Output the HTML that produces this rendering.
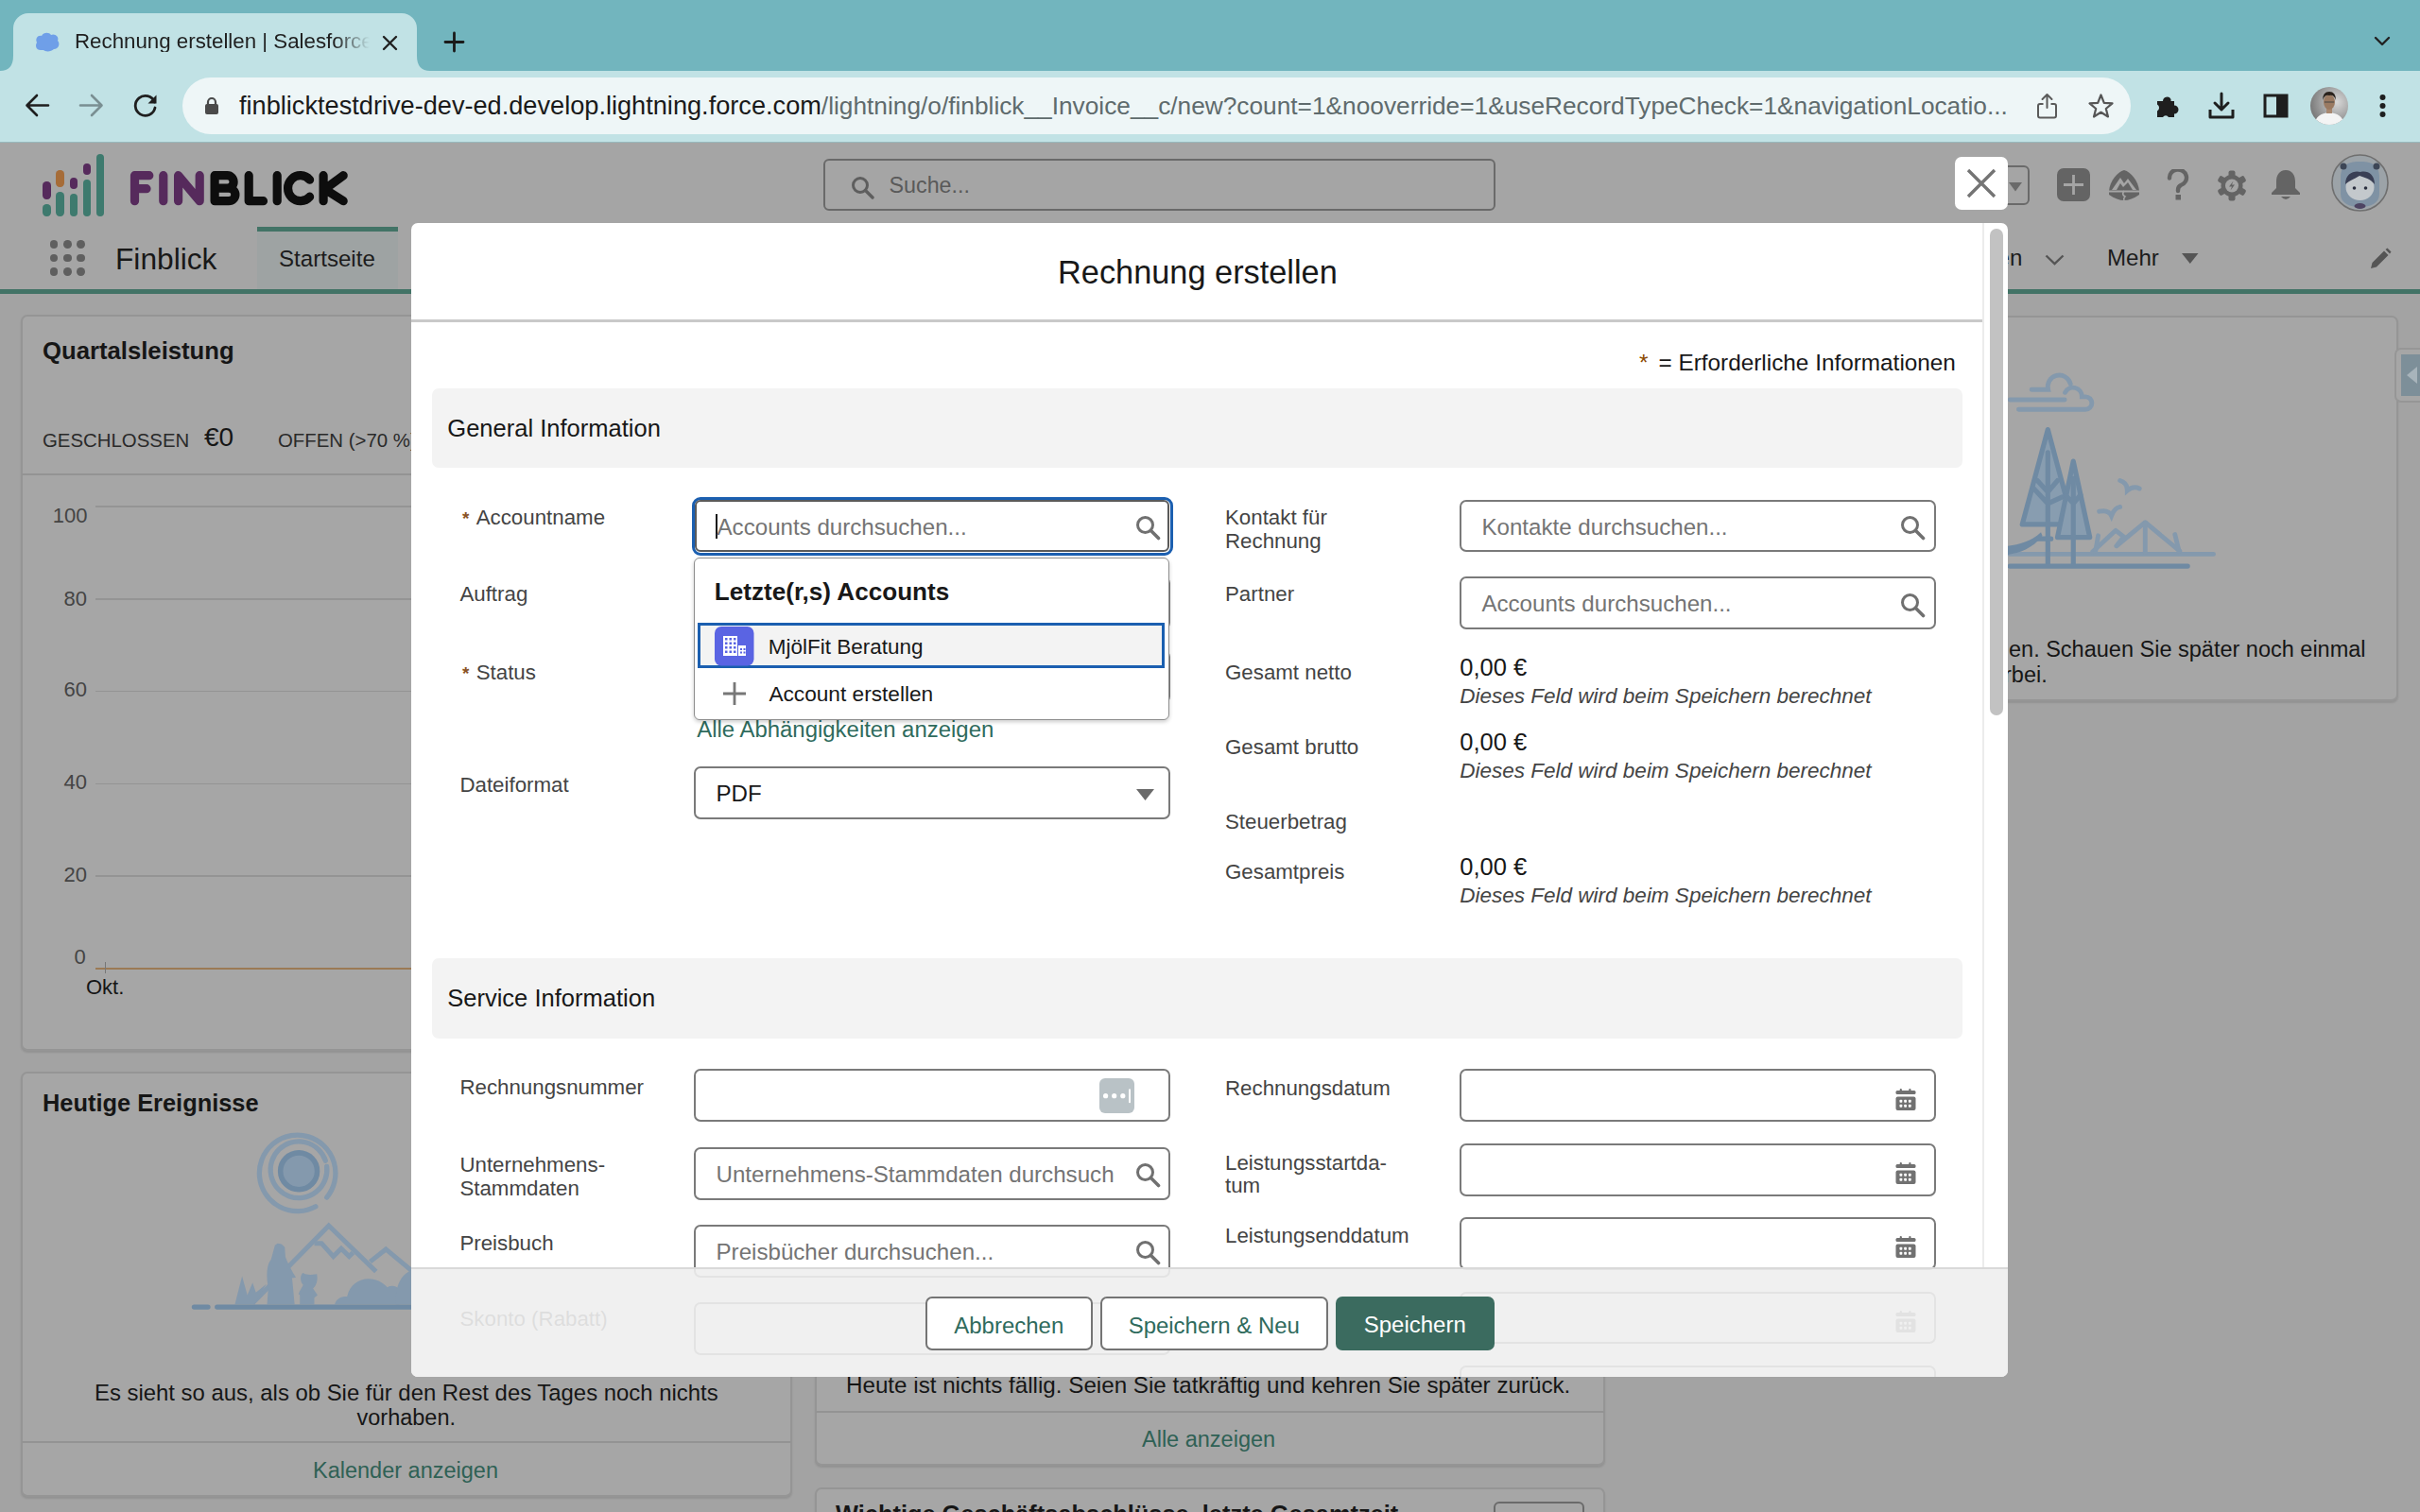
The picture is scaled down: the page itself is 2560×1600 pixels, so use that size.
<!DOCTYPE html>
<html><head><meta charset="utf-8"><title>Rechnung erstellen</title>
<style>
html,body{margin:0;padding:0;width:2560px;height:1600px;overflow:hidden;background:#a3a3a3;}
body{position:relative;font-family:"Liberation Sans",sans-serif;}
.t{position:absolute;white-space:nowrap;line-height:1;}
.r{position:absolute;box-sizing:border-box;}
</style></head><body>
<div class="r" style="left:0.0px;top:0.0px;width:2560.0px;height:75.0px;background:#72b5be;"></div>
<div class="r" style="left:0.0px;top:75.0px;width:2560.0px;height:76.0px;background:#c1e2e5;"></div>
<div class="r" style="left:0.0px;top:149.5px;width:2560.0px;height:1.5px;background:#98b9bd;"></div>
<div class="r" style="left:14.0px;top:14.0px;width:427.0px;height:62.0px;background:#c1e2e5;border-radius:16px 16px 0 0;"></div>
<svg class="r" style="left:0px;top:59px" width="16" height="16"><path d="M0 16 Q14 16 14 0 L16 0 L16 16 Z" fill="#c1e2e5"/></svg>
<svg class="r" style="left:439px;top:59px" width="16" height="16"><path d="M16 16 Q2 16 2 0 L0 0 L0 16 Z" fill="#c1e2e5"/></svg>
<svg class="r" style="left:36px;top:33px;" width="28" height="22" viewBox="0 0 28 22"><path d="M7 20 C2 20 1 15 3 12 C1 8 4 4 8 5 C10 1 16 1 18 4 C22 2 27 6 25 10 C28 13 26 19 21 19 C18 22 12 22 10 20 Z" fill="#6f9fe8"/></svg>
<div class="t " style="left:79.0px;top:32.6px;font-size:22.3px;color:#1f1f1f;font-weight:400;font-style:normal;width:312px;overflow:hidden;-webkit-mask-image:linear-gradient(90deg,#000 88%,transparent 100%);">Rechnung erstellen | Salesforce</div>
<svg class="r" style="left:404px;top:37px;" width="17" height="17" viewBox="0 0 17 17"><path d="M2 2 L15 15 M15 2 L2 15" stroke="#222" stroke-width="2.4" stroke-linecap="round"/></svg>
<svg class="r" style="left:469px;top:33px;" width="23" height="23" viewBox="0 0 23 23"><path d="M11.5 2 V21 M2 11.5 H21" stroke="#1a1a1a" stroke-width="2.8" stroke-linecap="round"/></svg>
<svg class="r" style="left:2511px;top:38px;" width="18" height="12" viewBox="0 0 18 12"><path d="M2 2 L9 9 L16 2" stroke="#222" stroke-width="2.4" fill="none" stroke-linecap="round" stroke-linejoin="round"/></svg>
<svg class="r" style="left:26px;top:98px;" width="27" height="27" viewBox="0 0 27 27"><path d="M25 13.5 H3 M13 3 L2.5 13.5 L13 24" stroke="#1f1f1f" stroke-width="2.6" fill="none" stroke-linecap="round" stroke-linejoin="round"/></svg>
<svg class="r" style="left:83px;top:98px;" width="27" height="27" viewBox="0 0 27 27"><path d="M2 13.5 H24 M14 3 L24.5 13.5 L14 24" stroke="#7a8f92" stroke-width="2.6" fill="none" stroke-linecap="round" stroke-linejoin="round"/></svg>
<svg class="r" style="left:140px;top:98px;" width="28" height="27" viewBox="0 0 28 27"><path d="M23.5 10 A10.5 10.5 0 1 0 24 16" stroke="#1f1f1f" stroke-width="2.8" fill="none" stroke-linecap="round"/><path d="M25.5 2.5 V11.5 H16.5 Z" fill="#1f1f1f"/></svg>
<div class="r" style="left:193.0px;top:82.0px;width:2061.0px;height:60.0px;background:#eef6f7;border-radius:30px;"></div>
<svg class="r" style="left:216px;top:102px;" width="16" height="20" viewBox="0 0 16 20"><rect x="1" y="8" width="14" height="11" rx="2" fill="#4a4a4a"/><path d="M4 9 V6 A4 4 0 0 1 12 6 V9" stroke="#4a4a4a" stroke-width="2.2" fill="none"/></svg>
<div class="t " style="left:253.0px;top:97.5px;font-size:27.16px;color:#1a1a1a;font-weight:400;font-style:normal;">finblicktestdrive-dev-ed.develop.lightning.force.com<span style="color:#5f6b6d;font-size:26.27px">/lightning/o/finblick__Invoice__c/new?count=1&amp;nooverride=1&amp;useRecordTypeCheck=1&amp;navigationLocatio...</span></div>
<svg class="r" style="left:2153px;top:98px;" width="25" height="28" viewBox="0 0 25 28"><path d="M12.5 2.5 V16 M7.5 7 L12.5 2 L17.5 7" stroke="#5a5a5a" stroke-width="2" fill="none" stroke-linecap="round" stroke-linejoin="round"/><path d="M8.5 12 H5 Q3 12 3 14 V24.5 Q3 26.5 5 26.5 H20 Q22 26.5 22 24.5 V14 Q22 12 20 12 H16.5" stroke="#5a5a5a" stroke-width="2" fill="none" stroke-linejoin="round"/></svg>
<svg class="r" style="left:2208px;top:98px;" width="29" height="28" viewBox="0 0 29 28"><path d="M14.5 2.5 L17.8 10.8 L26.5 11.4 L19.8 17 L22 25.5 L14.5 20.8 L7 25.5 L9.2 17 L2.5 11.4 L11.2 10.8 Z" stroke="#555" stroke-width="2.2" fill="none" stroke-linejoin="round"/></svg>
<svg class="r" style="left:2280px;top:98px;" width="28" height="27" viewBox="0 0 28 27"><path d="M2 9 H8 A4.5 4.5 0 0 1 16.5 7 L16.5 9 H20 V13.5 A4.5 4.5 0 0 1 20 22.5 V26 H14 A3.5 3.5 0 0 0 8 26 H2 V19.5 A4 4 0 0 0 2 12.5 Z" fill="#1e1e1e"/></svg>
<svg class="r" style="left:2335px;top:97px;" width="30" height="30" viewBox="0 0 30 30"><path d="M15 2 V19 M8 12 L15 19 L22 12" stroke="#1e1e1e" stroke-width="3" fill="none" stroke-linecap="round" stroke-linejoin="round"/><path d="M3 19 V27 H27 V19" stroke="#1e1e1e" stroke-width="3" fill="none" stroke-linejoin="round"/></svg>
<svg class="r" style="left:2394px;top:99px;" width="27" height="26" viewBox="0 0 27 26"><rect x="2" y="2" width="23" height="22" fill="none" stroke="#1e1e1e" stroke-width="3"/><rect x="14" y="2" width="11" height="22" fill="#1e1e1e"/></svg>
<svg class="r" style="left:2444px;top:92px;" width="40" height="40" viewBox="0 0 40 40"><defs><clipPath id="pc"><circle cx="20" cy="20" r="20"/></clipPath><radialGradient id="pg" cx="0.7" cy="0.4" r="0.8"><stop offset="0" stop-color="#d8d8d8"/><stop offset="1" stop-color="#6e6e6e"/></radialGradient></defs><g clip-path="url(#pc)"><rect x="0" y="0" width="40" height="40" fill="url(#pg)"/><path d="M4 40 Q6 28 20 27 Q34 28 36 40 Z" fill="#f4f4f4"/><rect x="17" y="22" width="6" height="6" fill="#a88870"/><ellipse cx="20" cy="16" rx="6" ry="8" fill="#9a7a62"/><path d="M13 14 Q13 5 20 5 Q27 5 27 14 Q25 8 20 9 Q15 8 13 14 Z" fill="#2a221c"/><path d="M15 16 H25" stroke="#444" stroke-width="1"/></g></svg>
<svg class="r" style="left:2516px;top:99px;" width="9" height="26" viewBox="0 0 9 26"><circle cx="4.5" cy="4" r="3" fill="#1e1e1e"/><circle cx="4.5" cy="13" r="3" fill="#1e1e1e"/><circle cx="4.5" cy="22" r="3" fill="#1e1e1e"/></svg>
<div class="r" style="left:0.0px;top:151.0px;width:2560.0px;height:159.0px;background:#a5a5a5;"></div>
<div class="r" style="left:45.4px;top:192.0px;width:8.3px;height:18.7px;background:#562a5c;border-radius:4.2px;"></div>
<div class="r" style="left:45.4px;top:216.2px;width:8.3px;height:12.6px;background:#3e7a6e;border-radius:4.2px;"></div>
<div class="r" style="left:59.3px;top:179.6px;width:8.3px;height:18.9px;background:#a66c38;border-radius:4.2px;"></div>
<div class="r" style="left:59.3px;top:203.2px;width:8.3px;height:25.6px;background:#3e7a6e;border-radius:4.2px;"></div>
<div class="r" style="left:73.5px;top:188.3px;width:8.3px;height:11.6px;background:#562a5c;border-radius:4.2px;"></div>
<div class="r" style="left:73.5px;top:204.7px;width:8.3px;height:24.1px;background:#3e7a6e;border-radius:4.2px;"></div>
<div class="r" style="left:87.8px;top:173.4px;width:8.3px;height:11.3px;background:#562a5c;border-radius:4.2px;"></div>
<div class="r" style="left:87.8px;top:189.8px;width:8.3px;height:39.0px;background:#3e7a6e;border-radius:4.2px;"></div>
<div class="r" style="left:101.6px;top:162.7px;width:8.3px;height:66.1px;background:#3e7a6e;border-radius:4.2px;"></div>
<svg class="r" style="left:130px;top:170px;" width="250" height="60" viewBox="0 0 250 60"><g fill="none" stroke-width="9.2" stroke-linecap="round" stroke-linejoin="round" transform="translate(-130 -170)">
<g stroke="#562a5c">
<path d="M142.5 212.7 V185.7 H157.8 M142.5 199.7 H155"/>
<path d="M172.8 185.7 V212.7"/>
<path d="M188.6 212.7 V185.7 L211.2 212.7 V185.7"/>
</g>
<g stroke="#0d0d0d">
<path d="M227.1 185.7 V212.7 H242 A6.9 6.75 0 0 0 242 199.2 H227.1 M227.1 185.7 H240.5 A6.6 6.75 0 0 1 240.5 199.2"/>
<path d="M263.2 185.7 V212.7 H278.5"/>
<path d="M293.2 185.7 V212.7"/>
<path d="M327.6 190.2 A13.2 13.5 0 1 0 327.6 208.2"/>
<path d="M342.1 185.7 V212.7 M363.2 185.7 L343.5 200.2 L363.2 212.7"/>
</g></g></svg>
<div class="r" style="left:870.5px;top:168.0px;width:711.0px;height:55.0px;border:2px solid #6a6a6a;border-radius:6px;"></div>
<svg class="r" style="left:900px;top:186px;" width="26" height="25" viewBox="0 0 26 25"><circle cx="10" cy="10" r="7.5" stroke="#5e5e5e" stroke-width="3" fill="none"/><path d="M15.5 15.5 L23 23" stroke="#5e5e5e" stroke-width="3.4" stroke-linecap="round"/></svg>
<div class="t " style="left:940.5px;top:185.3px;font-size:23.3px;color:#5a5a5a;font-weight:400;font-style:normal;">Suche...</div>
<div class="r" style="left:2100.0px;top:175.0px;width:47.0px;height:41.5px;border:2px solid #6a6a6a;border-radius:6px;"></div>
<svg class="r" style="left:2125px;top:193px;" width="15" height="10" viewBox="0 0 15 10"><path d="M0 0 H14 L7 9.5 Z" fill="#6a6a6a"/></svg>
<svg class="r" style="left:2176px;top:178px;" width="35" height="35" viewBox="0 0 35 35"><rect x="0" y="0" width="35" height="35" rx="7" fill="#646464"/><path d="M17.5 7 V28 M7 17.5 H28" stroke="#a5a5a5" stroke-width="2.8"/></svg>
<svg class="r" style="left:2230px;top:179px;" width="34" height="34" viewBox="0 0 34 34"><path d="M17 1 C24 3 32 12 33 23 L33 27 C27 31 22 33 17 33 C12 33 7 31 1 27 L1 23 C2 12 10 3 17 1 Z" fill="#646464"/><path d="M4 22 L13 9 L17 15 L21 10 L30 22 Z" fill="#a5a5a5"/><path d="M9 22 L13 15 L16 19 L21 14 L26 22 Z" fill="#646464"/><path d="M1 23.5 H33" stroke="#a5a5a5" stroke-width="2"/><path d="M17 23 Q14 27 18 29 Q16 31 17 33" stroke="#a5a5a5" stroke-width="1.6" fill="none"/></svg>
<svg class="r" style="left:2292px;top:179px;" width="24" height="33" viewBox="0 0 24 33"><path d="M3 9.5 A9 8.5 0 1 1 15 17 Q12 18.5 12 22 V23" stroke="#646464" stroke-width="4.4" fill="none" stroke-linecap="round"/><rect x="9.5" y="27" width="5.5" height="5.5" fill="#646464"/></svg>
<svg class="r" style="left:2345px;top:180px;" width="32" height="33" viewBox="0 0 32 33"><g transform="translate(16 16.5)"><circle r="11.5" fill="#646464"/><rect x="-3.5" y="-16" width="7" height="7" rx="2" fill="#646464" transform="rotate(0)"/><rect x="-3.5" y="-16" width="7" height="7" rx="2" fill="#646464" transform="rotate(60)"/><rect x="-3.5" y="-16" width="7" height="7" rx="2" fill="#646464" transform="rotate(120)"/><rect x="-3.5" y="-16" width="7" height="7" rx="2" fill="#646464" transform="rotate(180)"/><rect x="-3.5" y="-16" width="7" height="7" rx="2" fill="#646464" transform="rotate(240)"/><rect x="-3.5" y="-16" width="7" height="7" rx="2" fill="#646464" transform="rotate(300)"/><circle r="7" fill="#a5a5a5"/><path d="M1.5 -5 L-3 1 H0 L-1.5 5 L3 -1 H0 Z" fill="#646464"/></g></svg>
<svg class="r" style="left:2401px;top:179px;" width="34" height="33" viewBox="0 0 34 33"><path d="M17 1 C24 1 27 7 27 13 V20 L32 25 V27 H2 V25 L7 20 V13 C7 7 10 1 17 1 Z" fill="#646464"/><path d="M12 29 H22 Q17 35 12 29 Z" fill="#646464"/></svg>
<svg class="r" style="left:2466px;top:163px;" width="61" height="61" viewBox="0 0 61 61"><circle cx="30.5" cy="30.5" r="29.5" fill="#9ca3a8" stroke="#6f6f6f" stroke-width="1.6"/><path d="M10 25 C10 10 20 8 30.5 8 C41 8 51 10 51 25 L51 42 C51 52 42 56 30.5 56 C19 56 10 52 10 42 Z" fill="#7f92a4"/><circle cx="13" cy="13" r="3.5" fill="#3d4656"/><circle cx="48" cy="13" r="3.5" fill="#3d4656"/><ellipse cx="30.5" cy="35" rx="15" ry="14" fill="#c3c8cc"/><path d="M15 32 C15 20 25 17 31 19 C38 17 46 21 46 32 C41 26 36 25 30 23 C24 27 19 28 15 32 Z" fill="#3a3f55"/><circle cx="24.5" cy="36" r="1.8" fill="#2b2f3f"/><circle cx="36.5" cy="36" r="1.8" fill="#2b2f3f"/><ellipse cx="30.5" cy="55" rx="6" ry="3" fill="#4d4462"/></svg>
<div class="r" style="left:52.5px;top:254.0px;width:8.8px;height:8.8px;background:#5f5f5f;border-radius:50%;"></div>
<div class="r" style="left:52.5px;top:268.6px;width:8.8px;height:8.8px;background:#5f5f5f;border-radius:50%;"></div>
<div class="r" style="left:52.5px;top:283.2px;width:8.8px;height:8.8px;background:#5f5f5f;border-radius:50%;"></div>
<div class="r" style="left:66.9px;top:254.0px;width:8.8px;height:8.8px;background:#5f5f5f;border-radius:50%;"></div>
<div class="r" style="left:66.9px;top:268.6px;width:8.8px;height:8.8px;background:#5f5f5f;border-radius:50%;"></div>
<div class="r" style="left:66.9px;top:283.2px;width:8.8px;height:8.8px;background:#5f5f5f;border-radius:50%;"></div>
<div class="r" style="left:81.3px;top:254.0px;width:8.8px;height:8.8px;background:#5f5f5f;border-radius:50%;"></div>
<div class="r" style="left:81.3px;top:268.6px;width:8.8px;height:8.8px;background:#5f5f5f;border-radius:50%;"></div>
<div class="r" style="left:81.3px;top:283.2px;width:8.8px;height:8.8px;background:#5f5f5f;border-radius:50%;"></div>
<div class="t " style="left:122.0px;top:258.7px;font-size:31.7px;color:#181818;font-weight:400;font-style:normal;">Finblick</div>
<div class="r" style="left:271.5px;top:240.0px;width:149.0px;height:66.0px;background:#9ea3a3;"></div>
<div class="r" style="left:271.5px;top:240.0px;width:149.0px;height:4.7px;background:#427366;"></div>
<div class="t " style="left:295.0px;top:261.9px;font-size:24.1px;color:#1c1c1c;font-weight:400;font-style:normal;">Startseite</div>
<div class="t " style="left:2112.5px;top:260.6px;font-size:24.1px;color:#1c1c1c;font-weight:400;font-style:normal;">en</div>
<svg class="r" style="left:2163px;top:269px;" width="21" height="12" viewBox="0 0 21 12"><path d="M1.5 1.5 L10.5 10 L19.5 1.5" stroke="#555" stroke-width="2.4" fill="none"/></svg>
<div class="t " style="left:2229.0px;top:260.6px;font-size:24.1px;color:#1c1c1c;font-weight:400;font-style:normal;">Mehr</div>
<svg class="r" style="left:2308px;top:268px;" width="18" height="11" viewBox="0 0 18 11"><path d="M0 0 H17.5 L8.75 11 Z" fill="#555"/></svg>
<svg class="r" style="left:2505px;top:262px;" width="25" height="25" viewBox="0 0 25 25"><path d="M3 22 L4.5 16 L17 3.5 L21.5 8 L9 20.5 Z" fill="#555"/><path d="M18.5 2 L20.5 0.5 L24.5 4.5 L23 6.5 Z" fill="#555"/></svg>
<div class="r" style="left:0.0px;top:306.0px;width:2560.0px;height:4.6px;background:#427366;"></div>
<div class="r" style="left:22.0px;top:333.0px;width:1676.0px;height:779.0px;background:#a6a6a6;border:2px solid #959595;border-radius:7px;box-shadow:0 2px 2px rgba(0,0,0,0.10);"></div>
<div class="t " style="left:45.0px;top:359.2px;font-size:25.7px;color:#161616;font-weight:700;font-style:normal;">Quartalsleistung</div>
<div class="t " style="left:45.0px;top:455.5px;font-size:20.4px;color:#2a2a2a;font-weight:400;font-style:normal;">GESCHLOSSEN</div>
<div class="t " style="left:216.0px;top:449.1px;font-size:28px;color:#161616;font-weight:400;font-style:normal;">€0</div>
<div class="t " style="left:294.0px;top:455.5px;font-size:20.4px;color:#2a2a2a;font-weight:400;font-style:normal;">OFFEN (&gt;70 %)</div>
<div class="r" style="left:23.0px;top:500.5px;width:1674.0px;height:2.0px;background:#939393;"></div>
<div class="t " style="left:55.8px;top:534.6px;font-size:22px;color:#444444;font-weight:400;font-style:normal;">100</div>
<div class="r" style="left:100.5px;top:535.1px;width:1580.0px;height:1.6px;background:#949494;"></div>
<div class="t " style="left:67.5px;top:623.4px;font-size:22px;color:#444444;font-weight:400;font-style:normal;">80</div>
<div class="r" style="left:100.5px;top:633.1px;width:1580.0px;height:1.6px;background:#949494;"></div>
<div class="t " style="left:67.5px;top:719.2px;font-size:22px;color:#444444;font-weight:400;font-style:normal;">60</div>
<div class="r" style="left:100.5px;top:730.5px;width:1580.0px;height:1.6px;background:#949494;"></div>
<div class="t " style="left:67.5px;top:817.2px;font-size:22px;color:#444444;font-weight:400;font-style:normal;">40</div>
<div class="r" style="left:100.5px;top:828.5px;width:1580.0px;height:1.6px;background:#949494;"></div>
<div class="t " style="left:67.5px;top:915.4px;font-size:22px;color:#444444;font-weight:400;font-style:normal;">20</div>
<div class="r" style="left:100.5px;top:926.3px;width:1580.0px;height:1.6px;background:#949494;"></div>
<div class="t " style="left:78.5px;top:1002.2px;font-size:22px;color:#444444;font-weight:400;font-style:normal;">0</div>
<div class="r" style="left:100.5px;top:1023.5px;width:1580.0px;height:2.0px;background:#9b7a55;"></div>
<div class="r" style="left:110.5px;top:1018.0px;width:1.2px;height:12.0px;background:#777;"></div>
<div class="t " style="left:91.0px;top:1034.2px;font-size:22px;color:#161616;font-weight:400;font-style:normal;">Okt.</div>
<div class="r" style="left:22.0px;top:1134.0px;width:816.0px;height:450.0px;background:#a6a6a6;border:2px solid #959595;border-radius:7px;box-shadow:0 2px 2px rgba(0,0,0,0.10);"></div>
<div class="t " style="left:45.0px;top:1155.0px;font-size:25.4px;color:#161616;font-weight:700;font-style:normal;">Heutige Ereignisse</div>
<svg class="r" style="left:195px;top:1190px;" width="240" height="210" viewBox="0 0 1728 1512"><g fill="none" stroke-linecap="round">
<path d="M1000 625 A290 290 0 1 1 1085 555" stroke="#8499ad" stroke-width="38"/>
<path d="M1085 320 A215 215 0 1 1 1075 275" stroke="#8499ad" stroke-width="38"/>
</g>
<circle cx="872" cy="355" r="140" fill="#8499ad" stroke="#6f8aa3" stroke-width="40"/>
<g fill="none" stroke="#8499ad" stroke-width="36" stroke-linejoin="miter" stroke-linecap="butt">
<path d="M520 1360 L1100 770 L1460 1120"/>
<path d="M990 905 L1045 905 L1135 1005 L1195 945 L1255 1005 L1285 975"/>
<path d="M1415 1045 L1535 950 L1740 1120"/>
</g>
<g fill="#8499ad">
<path d="M630 1370 L640 1240 C620 1150 630 1060 660 1030 L690 920 L710 905 L740 910 L765 935 L770 1010 C790 1060 820 1120 850 1165 L820 1170 C830 1250 835 1320 840 1370 Z"/>
<path d="M880 1370 L880 1300 L870 1290 C880 1260 900 1240 905 1220 C880 1200 880 1140 905 1130 L920 1140 L960 1145 L1010 1140 C1020 1200 1000 1230 980 1250 L1015 1300 L990 1320 L990 1370 Z"/>
<path d="M385 1370 L440 1155 L480 1300 L520 1205 L545 1280 L625 1215 L530 1370 Z"/>
<path d="M1145 1370 C1160 1320 1200 1310 1240 1310 C1260 1220 1330 1175 1400 1175 C1480 1175 1530 1220 1545 1240 C1580 1220 1620 1230 1640 1260 L1640 1370 Z"/>
<path d="M1610 1370 C1600 1200 1680 1120 1740 1110 V1370 Z"/>
</g>
<path d="M75 1390 H180 M250 1390 H1740" stroke="#6f8aa3" stroke-width="38" stroke-linecap="round"/></svg>
<div class="t " style="left:100.0px;top:1461.8px;font-size:23.9px;color:#161616;font-weight:400;font-style:normal;">Es sieht so aus, als ob Sie für den Rest des Tages noch nichts</div>
<div class="t " style="left:377.5px;top:1488.6px;font-size:23.5px;color:#161616;font-weight:400;font-style:normal;">vorhaben.</div>
<div class="r" style="left:23.0px;top:1525.0px;width:814.0px;height:2.0px;background:#939393;"></div>
<div class="t " style="left:331.0px;top:1544.5px;font-size:23.5px;color:#2f6155;font-weight:400;font-style:normal;">Kalender anzeigen</div>
<div class="r" style="left:862.0px;top:1134.0px;width:836.0px;height:417.0px;background:#a6a6a6;border:2px solid #959595;border-radius:7px;box-shadow:0 2px 2px rgba(0,0,0,0.10);"></div>
<div class="t " style="left:895.0px;top:1453.5px;font-size:24.2px;color:#161616;font-weight:400;font-style:normal;">Heute ist nichts fällig. Seien Sie tatkräftig und kehren Sie später zurück.</div>
<div class="r" style="left:863.0px;top:1493.0px;width:834.0px;height:2.0px;background:#939393;"></div>
<div class="t " style="left:1208.0px;top:1511.8px;font-size:23.5px;color:#2f6155;font-weight:400;font-style:normal;">Alle anzeigen</div>
<div class="r" style="left:862.0px;top:1574.0px;width:836.0px;height:60.0px;background:#a6a6a6;border:2px solid #959595;border-radius:7px;box-shadow:0 2px 2px rgba(0,0,0,0.10);"></div>
<div class="t " style="left:884.0px;top:1590.2px;font-size:25.4px;color:#161616;font-weight:700;font-style:normal;">Wichtige Geschäftsabschlüsse, letzte Gesamtzeit</div>
<div class="r" style="left:1580.0px;top:1589.0px;width:96.0px;height:40.0px;border:2px solid #6a6a6a;border-radius:6px;background:#a6a6a6;"></div>
<div class="r" style="left:1721.0px;top:334.0px;width:816.0px;height:407.5px;background:#a6a6a6;border:2px solid #959595;border-radius:7px;box-shadow:0 2px 2px rgba(0,0,0,0.10);"></div>
<svg class="r" style="left:2124px;top:380px;" width="236" height="230" viewBox="0 0 1551 1512"><g fill="none" stroke="#8499ad" stroke-width="32" stroke-linecap="round">
<path d="M165 212 H280 A78 78 0 0 1 435 172"/>
<path d="M398 232 A62 62 0 0 1 515 262 H540 A44 44 0 0 1 540 350 H75"/>
<path d="M15 283 H395"/>
<path d="M15 1357 H1430"/>
<path d="M590 1340 L750 1192 L805 1235 L755 1300 L955 1135 L1195 1335" stroke-linejoin="round"/>
<path d="M955 1140 V1345"/>
<path d="M610 1335 L628 1228 M1190 1335 L1162 1220"/>
<path d="M780 845 Q830 860 830 915 Q870 880 915 900"/>
<path d="M635 1060 Q700 1045 720 1090 Q740 1035 780 1028"/>
</g>
<g stroke="#6f8aa3" stroke-width="34" stroke-linejoin="round" stroke-linecap="round">
<path d="M278 490 L100 1150 L455 1150 Z" fill="#889db0"/>
<path d="M278 650 V1430 M205 845 L278 925 L345 845 M180 900 L278 1005 L375 960" fill="none"/>
<path d="M455 710 L345 1240 L570 1240 Z" fill="#889db0"/>
<path d="M455 830 V1430 M405 950 L455 1005 L505 945" fill="none"/>
<path d="M205 1250 H300" fill="none"/>
<path d="M15 1440 H1250" fill="none"/>
</g>
<path d="M0 1300 C80 1290 160 1270 230 1205 L240 1230 C170 1320 80 1350 0 1360 Z" fill="#6f8aa3"/></svg>
<div class="t " style="left:2125.0px;top:675.8px;font-size:23.5px;color:#161616;font-weight:400;font-style:normal;">en. Schauen Sie später noch einmal</div>
<div class="t " style="left:2120.0px;top:702.6px;font-size:23.5px;color:#161616;font-weight:400;font-style:normal;">rbei.</div>
<div class="r" style="left:2533.0px;top:368.0px;width:40.0px;height:58.0px;background:#a6a6a6;border:2px solid #969696;border-radius:7px 0 0 7px;"></div>
<div class="r" style="left:2540.0px;top:375.0px;width:20.0px;height:44.0px;background:#7d8f99;"></div>
<svg class="r" style="left:2546px;top:388px;" width="12" height="18" viewBox="0 0 12 18"><path d="M11 0 V18 L0 9 Z" fill="#a8b4bb"/></svg>
<div class="r" style="left:2067.5px;top:165.5px;width:56.5px;height:56.5px;background:#ffffff;border-radius:7px;"></div>
<svg class="r" style="left:2080px;top:178px;" width="32" height="32" viewBox="0 0 32 32"><path d="M2 2 L30 30 M30 2 L2 30" stroke="#747474" stroke-width="3.4"/></svg>
<div class="r" style="left:435.0px;top:236.0px;width:1689.0px;height:1221.0px;background:#ffffff;border-radius:7px;"></div>
<div class="t " style="left:1119.0px;top:271.1px;font-size:34.35px;color:#181818;font-weight:400;font-style:normal;">Rechnung erstellen</div>
<div class="r" style="left:435.0px;top:338.0px;width:1663.0px;height:3.0px;background:#c9c9c9;"></div>
<div class="r" style="left:2097.0px;top:236.0px;width:1.5px;height:1105.0px;background:#ececec;"></div>
<div class="r" style="left:2105.2px;top:242.4px;width:13.8px;height:514.5px;background:#c2c2c2;border-radius:7px;"></div>
<div class="r" style="left:0;top:0;width:2560px;height:1600px;clip-path:inset(236px 436px 143px 435px round 7px);">
<div class="t " style="left:1734.0px;top:372.4px;font-size:24.33px;color:#8c4b02;font-weight:400;font-style:normal;">*</div>
<div class="t " style="left:1754.5px;top:372.4px;font-size:24.33px;color:#181818;font-weight:400;font-style:normal;">= Erforderliche Informationen</div>
<div class="r" style="left:457.0px;top:411.0px;width:1619.0px;height:84.0px;background:#f3f3f3;border-radius:7px;"></div>
<div class="t " style="left:473.3px;top:441.1px;font-size:25.54px;color:#181818;font-weight:400;font-style:normal;">General Information</div>
<div class="t " style="left:489.0px;top:538.9px;font-size:19px;color:#8a5326;font-weight:700;font-style:normal;">*</div>
<div class="t " style="left:503.7px;top:537.1px;font-size:22.3px;color:#444444;font-weight:400;font-style:normal;">Accountname</div>
<div class="t " style="left:486.4px;top:618.3px;font-size:22.3px;color:#444444;font-weight:400;font-style:normal;">Auftrag</div>
<div class="t " style="left:489.0px;top:702.5px;font-size:19px;color:#8a5326;font-weight:700;font-style:normal;">*</div>
<div class="t " style="left:503.7px;top:700.7px;font-size:22.3px;color:#444444;font-weight:400;font-style:normal;">Status</div>
<div class="t " style="left:486.4px;top:820.1px;font-size:22.3px;color:#444444;font-weight:400;font-style:normal;">Dateiformat</div>
<div class="r" style="left:734.0px;top:610.0px;width:503.5px;height:56.0px;border:2px solid #7a7a7a;border-radius:7px;background:#fff;"></div>
<div class="r" style="left:734.0px;top:688.0px;width:503.5px;height:56.0px;border:2px solid #7a7a7a;border-radius:7px;background:#fff;"></div>
<div class="r" style="left:731.5px;top:525.5px;width:509.0px;height:62.0px;border:3.5px solid #1b5fb0;border-radius:9px;background:#fff;"></div>
<div class="r" style="left:735.0px;top:529.0px;width:502.0px;height:55.0px;border:2px solid #5a5a5a;border-radius:6px;"></div>
<div class="r" style="left:757.0px;top:544.0px;width:1.6px;height:25.5px;background:#181818;"></div>
<div class="t " style="left:758.5px;top:545.8px;font-size:24.14px;color:#747474;font-weight:400;font-style:normal;">Accounts durchsuchen...</div>
<svg class="r" style="left:1200.5px;top:545px;" width="27" height="27" viewBox="0 0 27 27"><circle cx="10.5" cy="10.5" r="8" stroke="#707070" stroke-width="3" fill="none"/><path d="M16.5 16.5 L24.5 24.5" stroke="#707070" stroke-width="3.6" stroke-linecap="round"/></svg>
<div class="r" style="left:734.0px;top:811.0px;width:503.5px;height:56.0px;border:2px solid #7a7a7a;border-radius:7px;background:#fff;"></div>
<div class="t " style="left:757.5px;top:828.0px;font-size:24.14px;color:#181818;font-weight:400;font-style:normal;">PDF</div>
<svg class="r" style="left:1202px;top:835px;" width="19" height="12" viewBox="0 0 19 12"><path d="M0 0 H19 L9.5 12 Z" fill="#6a6a6a"/></svg>
<div class="t " style="left:737.2px;top:759.7px;font-size:23.94px;color:#2f6b5d;font-weight:400;font-style:normal;">Alle Abhängigkeiten anzeigen</div>
<div class="t " style="left:1296.0px;top:537.1px;font-size:22.3px;color:#444444;font-weight:400;font-style:normal;">Kontakt für</div>
<div class="t " style="left:1296.0px;top:561.7px;font-size:22.3px;color:#444444;font-weight:400;font-style:normal;">Rechnung</div>
<div class="r" style="left:1544.0px;top:528.8px;width:503.5px;height:55.5px;border:2px solid #7a7a7a;border-radius:7px;background:#fff;"></div>
<div class="t " style="left:1567.4px;top:545.8px;font-size:24.14px;color:#747474;font-weight:400;font-style:normal;">Kontakte durchsuchen...</div>
<svg class="r" style="left:2009.5px;top:545px;" width="27" height="27" viewBox="0 0 27 27"><circle cx="10.5" cy="10.5" r="8" stroke="#707070" stroke-width="3" fill="none"/><path d="M16.5 16.5 L24.5 24.5" stroke="#707070" stroke-width="3.6" stroke-linecap="round"/></svg>
<div class="t " style="left:1296.0px;top:618.3px;font-size:22.3px;color:#444444;font-weight:400;font-style:normal;">Partner</div>
<div class="r" style="left:1544.0px;top:610.0px;width:503.5px;height:56.0px;border:2px solid #7a7a7a;border-radius:7px;background:#fff;"></div>
<div class="t " style="left:1567.4px;top:627.0px;font-size:24.14px;color:#747474;font-weight:400;font-style:normal;">Accounts durchsuchen...</div>
<svg class="r" style="left:2009.5px;top:626.5px;" width="27" height="27" viewBox="0 0 27 27"><circle cx="10.5" cy="10.5" r="8" stroke="#707070" stroke-width="3" fill="none"/><path d="M16.5 16.5 L24.5 24.5" stroke="#707070" stroke-width="3.6" stroke-linecap="round"/></svg>
<div class="t " style="left:1296.0px;top:700.7px;font-size:22.3px;color:#444444;font-weight:400;font-style:normal;">Gesamt netto</div>
<div class="t " style="left:1544.3px;top:693.6px;font-size:25.5px;color:#181818;font-weight:400;font-style:normal;">0,00 €</div>
<div class="t " style="left:1544.3px;top:725.6px;font-size:22.51px;color:#444444;font-weight:400;font-style:italic;">Dieses Feld wird beim Speichern berechnet</div>
<div class="t " style="left:1296.0px;top:780.1px;font-size:22.3px;color:#444444;font-weight:400;font-style:normal;">Gesamt brutto</div>
<div class="t " style="left:1544.3px;top:773.0px;font-size:25.5px;color:#181818;font-weight:400;font-style:normal;">0,00 €</div>
<div class="t " style="left:1544.3px;top:804.6px;font-size:22.51px;color:#444444;font-weight:400;font-style:italic;">Dieses Feld wird beim Speichern berechnet</div>
<div class="t " style="left:1296.0px;top:858.7px;font-size:22.3px;color:#444444;font-weight:400;font-style:normal;">Steuerbetrag</div>
<div class="t " style="left:1296.0px;top:912.1px;font-size:22.3px;color:#444444;font-weight:400;font-style:normal;">Gesamtpreis</div>
<div class="t " style="left:1544.3px;top:905.4px;font-size:25.5px;color:#181818;font-weight:400;font-style:normal;">0,00 €</div>
<div class="t " style="left:1544.3px;top:936.8px;font-size:22.51px;color:#444444;font-weight:400;font-style:italic;">Dieses Feld wird beim Speichern berechnet</div>
<div class="r" style="left:457.0px;top:1014.0px;width:1619.0px;height:85.0px;background:#f3f3f3;border-radius:7px;"></div>
<div class="t " style="left:473.2px;top:1044.4px;font-size:25.54px;color:#181818;font-weight:400;font-style:normal;">Service Information</div>
<div class="t " style="left:486.4px;top:1140.4px;font-size:22.3px;color:#444444;font-weight:400;font-style:normal;">Rechnungsnummer</div>
<div class="r" style="left:734.0px;top:1131.3px;width:503.5px;height:56.0px;border:2px solid #7a7a7a;border-radius:7px;background:#fff;"></div>
<svg class="r" style="left:1163px;top:1141.3px;" width="37" height="37" viewBox="0 0 37 37"><rect x="0" y="0" width="37" height="37" rx="6" fill="#b9c2c6"/><circle cx="6.6" cy="18.7" r="2.6" fill="#fff"/><circle cx="15.7" cy="18.7" r="2.6" fill="#fff"/><circle cx="24.8" cy="18.7" r="2.6" fill="#fff"/><rect x="31" y="11.2" width="2" height="15" rx="1" fill="#fff"/></svg>
<div class="t " style="left:486.4px;top:1221.7px;font-size:22.3px;color:#444444;font-weight:400;font-style:normal;">Unternehmens-</div>
<div class="t " style="left:486.4px;top:1247.1px;font-size:22.3px;color:#444444;font-weight:400;font-style:normal;">Stammdaten</div>
<div class="r" style="left:734.0px;top:1213.5px;width:503.5px;height:56.0px;border:2px solid #7a7a7a;border-radius:7px;background:#fff;"></div>
<div class="t " style="left:757.5px;top:1231.2px;font-size:24.14px;color:#747474;font-weight:400;font-style:normal;width:421px;overflow:hidden;">Unternehmens-Stammdaten durchsuchen...</div>
<svg class="r" style="left:1200.5px;top:1229.5px;" width="27" height="27" viewBox="0 0 27 27"><circle cx="10.5" cy="10.5" r="8" stroke="#707070" stroke-width="3" fill="none"/><path d="M16.5 16.5 L24.5 24.5" stroke="#707070" stroke-width="3.6" stroke-linecap="round"/></svg>
<div class="t " style="left:486.4px;top:1304.7px;font-size:22.3px;color:#444444;font-weight:400;font-style:normal;">Preisbuch</div>
<div class="r" style="left:734.0px;top:1295.5px;width:503.5px;height:56.0px;border:2px solid #7a7a7a;border-radius:7px;background:#fff;"></div>
<div class="t " style="left:757.5px;top:1312.6px;font-size:24.14px;color:#747474;font-weight:400;font-style:normal;">Preisbücher durchsuchen...</div>
<svg class="r" style="left:1200.5px;top:1311.5px;" width="27" height="27" viewBox="0 0 27 27"><circle cx="10.5" cy="10.5" r="8" stroke="#707070" stroke-width="3" fill="none"/><path d="M16.5 16.5 L24.5 24.5" stroke="#707070" stroke-width="3.6" stroke-linecap="round"/></svg>
<div class="t " style="left:486.5px;top:1384.7px;font-size:22.3px;color:#444444;font-weight:400;font-style:normal;">Skonto (Rabatt)</div>
<div class="r" style="left:734.0px;top:1378.0px;width:503.5px;height:55.5px;border:2px solid #7a7a7a;border-radius:7px;background:#fff;"></div>
<div class="t " style="left:1296.0px;top:1140.8px;font-size:22.3px;color:#444444;font-weight:400;font-style:normal;">Rechnungsdatum</div>
<div class="r" style="left:1544.0px;top:1131.3px;width:503.5px;height:56.0px;border:2px solid #7a7a7a;border-radius:7px;background:#fff;"></div>
<svg class="r" style="left:2005px;top:1152px;" width="22" height="23" viewBox="0 0 22 23"><rect x="0.5" y="2" width="21" height="4" rx="1.5" fill="#717171"/><rect x="4.7" y="0" width="2.2" height="3" rx="1" fill="#717171"/><rect x="14.3" y="0" width="2.2" height="3" rx="1" fill="#717171"/><rect x="0.5" y="8.5" width="21" height="14.5" rx="2" fill="#717171"/><rect x="4.5" y="11.8" width="2.8" height="3" rx="0.8" fill="#fff"/><rect x="4.5" y="16.8" width="2.8" height="3" rx="0.8" fill="#fff"/><rect x="9.2" y="11.8" width="2.8" height="3" rx="0.8" fill="#fff"/><rect x="9.2" y="16.8" width="2.8" height="3" rx="0.8" fill="#fff"/><rect x="13.9" y="11.8" width="2.8" height="3" rx="0.8" fill="#fff"/><rect x="13.9" y="16.8" width="2.8" height="3" rx="0.8" fill="#fff"/></svg>
<div class="t " style="left:1296.0px;top:1219.7px;font-size:22.3px;color:#444444;font-weight:400;font-style:normal;">Leistungsstartda-</div>
<div class="t " style="left:1296.0px;top:1243.9px;font-size:22.3px;color:#444444;font-weight:400;font-style:normal;">tum</div>
<div class="r" style="left:1544.0px;top:1210.0px;width:503.5px;height:55.5px;border:2px solid #7a7a7a;border-radius:7px;background:#fff;"></div>
<svg class="r" style="left:2005px;top:1230px;" width="22" height="23" viewBox="0 0 22 23"><rect x="0.5" y="2" width="21" height="4" rx="1.5" fill="#717171"/><rect x="4.7" y="0" width="2.2" height="3" rx="1" fill="#717171"/><rect x="14.3" y="0" width="2.2" height="3" rx="1" fill="#717171"/><rect x="0.5" y="8.5" width="21" height="14.5" rx="2" fill="#717171"/><rect x="4.5" y="11.8" width="2.8" height="3" rx="0.8" fill="#fff"/><rect x="4.5" y="16.8" width="2.8" height="3" rx="0.8" fill="#fff"/><rect x="9.2" y="11.8" width="2.8" height="3" rx="0.8" fill="#fff"/><rect x="9.2" y="16.8" width="2.8" height="3" rx="0.8" fill="#fff"/><rect x="13.9" y="11.8" width="2.8" height="3" rx="0.8" fill="#fff"/><rect x="13.9" y="16.8" width="2.8" height="3" rx="0.8" fill="#fff"/></svg>
<div class="t " style="left:1296.0px;top:1297.1px;font-size:22.3px;color:#444444;font-weight:400;font-style:normal;">Leistungsenddatum</div>
<div class="r" style="left:1544.0px;top:1288.3px;width:503.5px;height:55.5px;border:2px solid #7a7a7a;border-radius:7px;background:#fff;"></div>
<svg class="r" style="left:2005px;top:1308.3px;" width="22" height="23" viewBox="0 0 22 23"><rect x="0.5" y="2" width="21" height="4" rx="1.5" fill="#717171"/><rect x="4.7" y="0" width="2.2" height="3" rx="1" fill="#717171"/><rect x="14.3" y="0" width="2.2" height="3" rx="1" fill="#717171"/><rect x="0.5" y="8.5" width="21" height="14.5" rx="2" fill="#717171"/><rect x="4.5" y="11.8" width="2.8" height="3" rx="0.8" fill="#fff"/><rect x="4.5" y="16.8" width="2.8" height="3" rx="0.8" fill="#fff"/><rect x="9.2" y="11.8" width="2.8" height="3" rx="0.8" fill="#fff"/><rect x="9.2" y="16.8" width="2.8" height="3" rx="0.8" fill="#fff"/><rect x="13.9" y="11.8" width="2.8" height="3" rx="0.8" fill="#fff"/><rect x="13.9" y="16.8" width="2.8" height="3" rx="0.8" fill="#fff"/></svg>
<div class="r" style="left:1544.0px;top:1366.5px;width:503.5px;height:55.5px;border:2px solid #7a7a7a;border-radius:7px;background:#fff;"></div>
<svg class="r" style="left:2005px;top:1386.5px;" width="22" height="23" viewBox="0 0 22 23"><rect x="0.5" y="2" width="21" height="4" rx="1.5" fill="#717171"/><rect x="4.7" y="0" width="2.2" height="3" rx="1" fill="#717171"/><rect x="14.3" y="0" width="2.2" height="3" rx="1" fill="#717171"/><rect x="0.5" y="8.5" width="21" height="14.5" rx="2" fill="#717171"/><rect x="4.5" y="11.8" width="2.8" height="3" rx="0.8" fill="#fff"/><rect x="4.5" y="16.8" width="2.8" height="3" rx="0.8" fill="#fff"/><rect x="9.2" y="11.8" width="2.8" height="3" rx="0.8" fill="#fff"/><rect x="9.2" y="16.8" width="2.8" height="3" rx="0.8" fill="#fff"/><rect x="13.9" y="11.8" width="2.8" height="3" rx="0.8" fill="#fff"/><rect x="13.9" y="16.8" width="2.8" height="3" rx="0.8" fill="#fff"/></svg>
<div class="r" style="left:1544.0px;top:1444.7px;width:503.5px;height:55.5px;border:2px solid #7a7a7a;border-radius:7px;background:#fff;"></div>
</div>
<div class="r" style="left:435.0px;top:1341.0px;width:1689.0px;height:116.0px;background:rgba(238,238,238,0.9);border-top:2.5px solid #d9d9d9;border-radius:0 0 7px 7px;"></div>
<div class="r" style="left:978.5px;top:1372.0px;width:177.5px;height:56.5px;border:2px solid #747474;border-radius:7px;background:#ffffff;"></div>
<div class="t " style="left:978.5px;top:1390.7px;font-size:23.98px;color:#2f6b5d;font-weight:400;font-style:normal;width:177.5px;text-align:center;">Abbrechen</div>
<div class="r" style="left:1164.0px;top:1372.0px;width:240.5px;height:56.5px;border:2px solid #747474;border-radius:7px;background:#ffffff;"></div>
<div class="t " style="left:1164.0px;top:1390.7px;font-size:23.98px;color:#2f6b5d;font-weight:400;font-style:normal;width:240.5px;text-align:center;">Speichern &amp; Neu</div>
<div class="r" style="left:1412.5px;top:1372.0px;width:168.5px;height:56.5px;background:#3b6b5f;border-radius:7px;"></div>
<div class="t " style="left:1442.8px;top:1390.2px;font-size:23.98px;color:#ffffff;font-weight:400;font-style:normal;">Speichern</div>
<div class="r" style="left:733.5px;top:590.0px;width:503.0px;height:172.0px;background:#fff;border:1.5px solid #8e8e8e;border-radius:6px;box-shadow:0 2px 4px rgba(0,0,0,0.2);"></div>
<div class="t " style="left:755.8px;top:613.4px;font-size:26.1px;color:#181818;font-weight:700;font-style:normal;">Letzte(r,s) Accounts</div>
<div class="r" style="left:738.0px;top:659.3px;width:494.0px;height:48.2px;background:#f3f3f3;border:3.5px solid #1b5fb0;"></div>
<svg class="r" style="left:756px;top:663px;" width="41.5" height="41.5" viewBox="0 0 41.5 41.5"><rect x="0" y="0" width="41.5" height="41.5" rx="7" fill="#5a64e3"/><path d="M9 10 H24 V31 H9 Z" fill="#fff"/><path d="M25 20 H33 V31 H25 Z" fill="#fff"/><rect x="11.0" y="12.0" width="2.5" height="2.5" fill="#5a64e3"/><rect x="11.0" y="16.5" width="2.5" height="2.5" fill="#5a64e3"/><rect x="11.0" y="21.0" width="2.5" height="2.5" fill="#5a64e3"/><rect x="11.0" y="25.5" width="2.5" height="2.5" fill="#5a64e3"/><rect x="15.5" y="12.0" width="2.5" height="2.5" fill="#5a64e3"/><rect x="15.5" y="16.5" width="2.5" height="2.5" fill="#5a64e3"/><rect x="15.5" y="21.0" width="2.5" height="2.5" fill="#5a64e3"/><rect x="15.5" y="25.5" width="2.5" height="2.5" fill="#5a64e3"/><rect x="20.0" y="12.0" width="2.5" height="2.5" fill="#5a64e3"/><rect x="20.0" y="16.5" width="2.5" height="2.5" fill="#5a64e3"/><rect x="20.0" y="21.0" width="2.5" height="2.5" fill="#5a64e3"/><rect x="20.0" y="25.5" width="2.5" height="2.5" fill="#5a64e3"/><rect x="27.0" y="23.0" width="2" height="2" fill="#5a64e3"/><rect x="27.0" y="26.5" width="2" height="2" fill="#5a64e3"/><rect x="30.5" y="23.0" width="2" height="2" fill="#5a64e3"/><rect x="30.5" y="26.5" width="2" height="2" fill="#5a64e3"/></svg>
<div class="t " style="left:812.8px;top:674.0px;font-size:22.47px;color:#181818;font-weight:400;font-style:normal;">MjölFit Beratung</div>
<svg class="r" style="left:764px;top:721px;" width="26" height="26" viewBox="0 0 26 26"><path d="M13 1 V25 M1 13 H25" stroke="#777" stroke-width="2.8"/></svg>
<div class="t " style="left:813.4px;top:723.4px;font-size:22.67px;color:#181818;font-weight:400;font-style:normal;">Account erstellen</div>
</body></html>
